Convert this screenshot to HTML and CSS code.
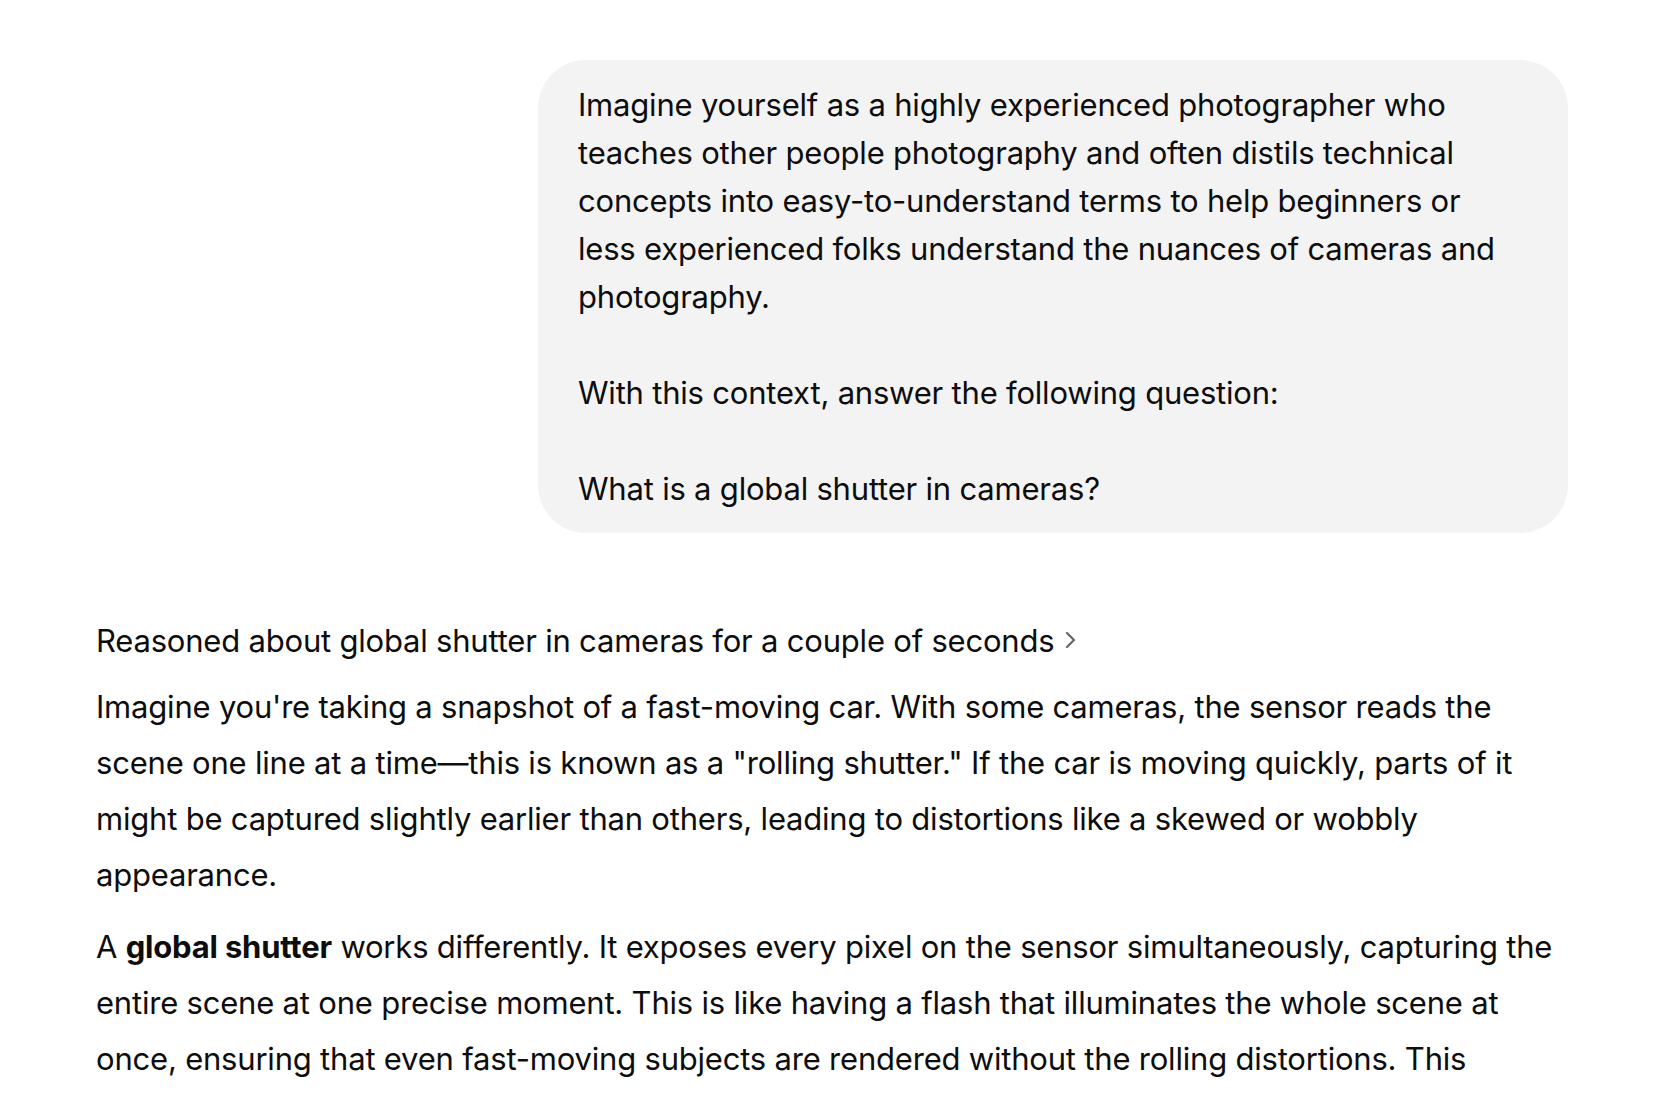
FILE: index.html
```html
<!DOCTYPE html>
<html lang="en">
<head>
<meta charset="utf-8">
<title>Chat</title>
<link rel="stylesheet" href="styles.css">
</head>
<body>
<main class="thread">
  <div class="user-row">
    <div class="bubble">Imagine yourself as a highly experienced photographer who teaches other people photography and often distils technical concepts into easy-to-understand terms to help beginners or less experienced folks understand the nuances of cameras and photography.

With this context, answer the following question:

What is a global shutter in cameras?</div>
  </div>
  <div class="assistant">
    <div class="reasoned">Reasoned about global shutter in cameras for a couple of seconds<svg class="chev" width="13" height="18" viewBox="0 0 13 18"><path d="M3 2 L10 9 L3 16" fill="none" stroke="#666666" stroke-width="2.2" stroke-linecap="round" stroke-linejoin="round"/></svg></div>
    <p class="para">Imagine you're taking a snapshot of a fast-moving car. With some cameras, the sensor reads the scene one line at a time—this is known as a "rolling shutter." If the car is moving quickly, parts of it might be captured slightly earlier than others, leading to distortions like a skewed or wobbly appearance.</p>
    <p class="para">A <strong>global shutter</strong> works differently. It exposes every pixel on the sensor simultaneously, capturing the entire scene at one precise moment. This is like having a flash that illuminates the whole scene at once, ensuring that even fast-moving subjects are rendered without the rolling distortions. This</p>
  </div>
</main>
</body>
</html>
```
FILE: styles.css
```css
html, body {
  margin: 0;
  padding: 0;
  background: #ffffff;
}
body {
  font-family: Inter, "Noto Sans", sans-serif;
  color: #0d0d0d;
  font-size: 31px;
  letter-spacing: -0.0065em;
  overflow: hidden;
}
.thread {
  width: 1472px;
  margin-left: 96px;
  padding-top: 60px;
}
.user-row {
  display: flex;
  justify-content: flex-end;
}
.bubble {
  box-sizing: border-box;
  width: 1030px;
  background: #f3f3f3;
  border-radius: 48px;
  padding: 21px 56px 20px 40px;
  line-height: 48px;
  white-space: pre-wrap;
}
.assistant {
  margin-top: 84px;
}
.reasoned {
  line-height: 48px;
  display: flex;
  align-items: center;
  gap: 10px;
}
.chev {
  flex: none;
  margin-top: -2px;
}
.para {
  margin: 14px 0 16px 0;
  line-height: 56px;
}
.para + .para {
  margin-top: 15px;
}
strong {
  font-weight: 700;
}
```
